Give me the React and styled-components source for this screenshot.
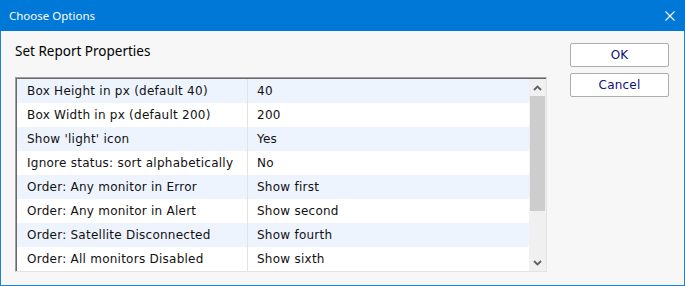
import React from "react";
import styled, { createGlobalStyle } from "styled-components";

const Global = createGlobalStyle`
  html, body { margin: 0; padding: 0; background: #f7f7f7; }
  * { box-sizing: border-box; }
`;

const Window = styled.div`
  width: 685px;
  height: 286px;
  border: 1px solid #1883d7;
  border-top: none;
  display: flex;
  flex-direction: column;
  background: #f7f7f7;
`;

const TitleBar = styled.div`
  height: 31px;
  background: #0078d7;
  display: flex;
  align-items: center;
  justify-content: space-between;
  margin: 0 -1px;
  padding-left: 9px;
  padding-right: 10px;
`;

const Title = styled.span`
  color: #ffffff;
  font-family: "Noto Sans", sans-serif;
  font-size: 11.5px;
  line-height: 16px;
`;

const Body = styled.div`
  flex: 1;
  display: flex;
  padding-left: 14px;
  gap: 23px;
`;

const Main = styled.div`
  width: 532px;
  display: flex;
  flex-direction: column;
`;

const Label = styled.div`
  margin-top: 11px;
  height: 18px;
  line-height: 18px;
  font-family: "Noto Sans", sans-serif;
  font-size: 13.5px;
  color: #000;
`;

const Frame = styled.div`
  margin-top: 17px;
  display: flex;
  height: 195px;
  border-top: 1px solid #a0a0a0;
  border-left: 1px solid #a0a0a0;
  border-right: 1px solid #e3e3e3;
  border-bottom: 1px solid #e3e3e3;
  box-shadow: inset 1px 1px 0 #696969;
  padding: 1px 0 0 1px;
  background: #fff;
`;

const Rows = styled.div`
  flex: 1;
  display: flex;
  flex-direction: column;
`;

const Row = styled.div`
  height: 24px;
  display: grid;
  grid-template-columns: 231px 1fr;
  background: ${(p) => (p.$alt ? "#eef4fe" : "#ffffff")};
  font-family: "DejaVu Sans", Verdana, sans-serif;
  font-size: 12px;
  letter-spacing: 0.25px;
  color: #111;
`;

const Cell = styled.div`
  display: flex;
  align-items: center;
  padding-left: ${(p) => (p.$first ? "10px" : "9px")};
  border-right: ${(p) => (p.$first ? "1px solid #e3e3e3" : "none")};
  white-space: nowrap;
  overflow: hidden;
`;

const Scrollbar = styled.div`
  width: 17px;
  background: #f0f0f0;
  display: flex;
  flex-direction: column;
`;

const ArrowBtn = styled.div`
  height: 17px;
  display: flex;
  align-items: center;
  justify-content: center;
`;

const Thumb = styled.div`
  height: 115px;
  margin: 0 1px;
  background: #cdcdcd;
`;

const Spacer = styled.div`
  flex: 1;
`;

const Buttons = styled.div`
  display: flex;
  flex-direction: column;
  gap: 6px;
  padding-top: 12px;
`;

const Button = styled.button`
  width: 99px;
  height: 24px;
  background: #ffffff;
  border: 1px solid #adadad;
  border-radius: 2px;
  font-family: "DejaVu Sans", Verdana, sans-serif;
  font-size: 12px;
  letter-spacing: 0.2px;
  color: #10107a;
  padding: 0;
  cursor: pointer;
`;

const rows = [
  ["Box Height in px (default 40)", "40"],
  ["Box Width in px (default 200)", "200"],
  ["Show 'light' icon", "Yes"],
  ["Ignore status: sort alphabetically", "No"],
  ["Order: Any monitor in Error", "Show first"],
  ["Order: Any monitor in Alert", "Show second"],
  ["Order: Satellite Disconnected", "Show fourth"],
  ["Order: All monitors Disabled", "Show sixth"],
];

const Chevron = ({ up }) => (
  <svg width="9" height="6" viewBox="0 0 9 6">
    <path
      d={up ? "M1 5 L4.5 1.5 L8 5" : "M1 1 L4.5 4.5 L8 1"}
      fill="none"
      stroke="#606060"
      strokeWidth="1.8"
    />
  </svg>
);

export default function App() {
  return (
    <>
      <Global />
      <Window>
        <TitleBar>
          <Title>Choose Options</Title>
          <svg width="10" height="10" viewBox="0 0 10 10">
            <path d="M0.5 0.5 L9.5 9.5 M9.5 0.5 L0.5 9.5" stroke="#fff" strokeWidth="1.1" />
          </svg>
        </TitleBar>
        <Body>
          <Main>
            <Label>Set Report Properties</Label>
            <Frame>
              <Rows>
                {rows.map(([k, v], i) => (
                  <Row key={k} $alt={i % 2 === 0}>
                    <Cell $first>{k}</Cell>
                    <Cell>{v}</Cell>
                  </Row>
                ))}
              </Rows>
              <Scrollbar>
                <ArrowBtn>
                  <Chevron up />
                </ArrowBtn>
                <Thumb />
                <Spacer />
                <ArrowBtn>
                  <Chevron />
                </ArrowBtn>
              </Scrollbar>
            </Frame>
          </Main>
          <Buttons>
            <Button>OK</Button>
            <Button>Cancel</Button>
          </Buttons>
        </Body>
      </Window>
    </>
  );
}
